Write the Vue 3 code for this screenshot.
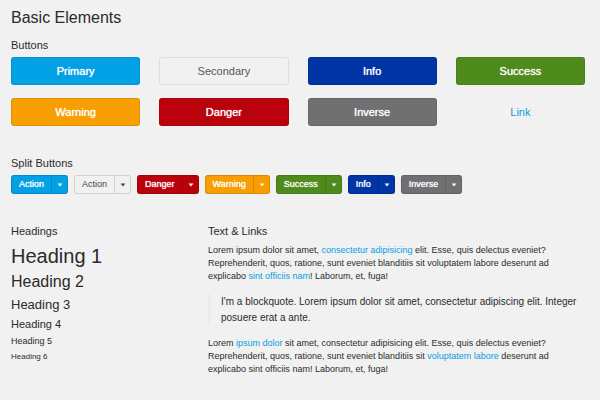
<script setup>
const buttons = ['Primary', 'Secondary', 'Info', 'Success', 'Warning', 'Danger', 'Inverse']

const splitButtons = [
  { label: 'Action', kind: 'primary' },
  { label: 'Action', kind: 'secondary' },
  { label: 'Danger', kind: 'danger' },
  { label: 'Warning', kind: 'warning' },
  { label: 'Success', kind: 'success' },
  { label: 'Info', kind: 'info' },
  { label: 'Inverse', kind: 'inverse' },
]
</script>

<template>
  <main class="page">
    <h1 class="title">Basic Elements</h1>

    <section>
      <h2 class="label">Buttons</h2>
      <div class="button-grid">
        <button v-for="name in buttons" :key="name" type="button" class="btn" :class="name.toLowerCase()">
          {{ name }}
        </button>
        <a href="#" class="btn link">Link</a>
      </div>
    </section>

    <section class="split-section">
      <h2 class="label">Split Buttons</h2>
      <div class="split-row">
        <div v-for="item in splitButtons" :key="item.kind" class="split" :class="item.kind">
          <button type="button" class="split-main">{{ item.label }}</button>
          <button type="button" class="split-toggle" :aria-label="item.label + ' options'">
            <svg class="caret" viewBox="0 0 6 4" aria-hidden="true">
              <path d="M0.6 0.6h4.8L3 3.4z" fill="currentColor" />
            </svg>
          </button>
        </div>
      </div>
    </section>

    <div class="columns">
      <section>
        <h2 class="label">Headings</h2>
        <h1 class="h1">Heading 1</h1>
        <h2 class="h2">Heading 2</h2>
        <h3 class="h3">Heading 3</h3>
        <h4 class="h4">Heading 4</h4>
        <h5 class="h5">Heading 5</h5>
        <h6 class="h6">Heading 6</h6>
      </section>

      <section class="prose">
        <h2 class="label">Text &amp; Links</h2>
        <p>
          Lorem ipsum dolor sit amet, <a href="#">consectetur adipisicing</a> elit. Esse, quis delectus eveniet?
          Reprehenderit, quos, ratione, sunt eveniet blanditiis sit voluptatem labore deserunt ad explicabo
          <a href="#">sint officiis nam</a>! Laborum, et, fuga!
        </p>
        <blockquote>
          I'm a blockquote. Lorem ipsum dolor sit amet, consectetur adipiscing elit. Integer posuere erat a ante.
        </blockquote>
        <p>
          Lorem <a href="#">ipsum dolor</a> sit amet, consectetur adipisicing elit. Esse, quis delectus eveniet?
          Reprehenderit, quos, ratione, sunt eveniet blanditiis sit <a href="#">voluptatem labore</a> deserunt ad
          explicabo sint officiis nam! Laborum, et, fuga!
        </p>
      </section>
    </div>
  </main>
</template>

<style>
body {
  background: #f1f1f1;
}
</style>

<style scoped>
.page {
  padding: 8px 15px 20px 11px;
  color: #2b2b2b;
  font-family: "Liberation Sans", Arial, sans-serif;
  font-size: 9px;
  line-height: 13px;
}

h1, h2, h3, h4, h5, h6, p {
  margin: 0;
  font-weight: 400;
}

.title {
  font-size: 16px;
  line-height: 20px;
  margin-bottom: 9px;
}

.label {
  font-size: 11px;
  line-height: 16px;
  margin-bottom: 4px;
}

a {
  color: #049fe1;
  text-decoration: none;
}

.button-grid {
  display: grid;
  grid-template-columns: repeat(4, 1fr);
  gap: 13px 19px;
}

.btn {
  display: block;
  box-sizing: border-box;
  padding: 5px;
  border: 1px solid rgba(0, 0, 0, 0.08);
  border-radius: 3px;
  color: #fff;
  font-family: inherit;
  font-size: 11px;
  line-height: 16px;
  text-align: center;
  text-shadow: 0 0 1px currentColor;
}

.primary { background: #02a0e4; }
.secondary { background: #f1f1f1; color: #555; }
.info { background: #0134a4; }
.success { background: #4f8a1d; }
.warning { background: #f79e02; }
.danger { background: #b9020c; }
.inverse { background: #6f7072; }

.btn.secondary,
.btn.link {
  text-shadow: none;
}

.btn.link {
  border-color: transparent;
  color: #049fe1;
}

.split-section {
  margin-top: 29px;
}

.split-row {
  display: flex;
  flex-wrap: wrap;
  gap: 6px;
}

.split {
  display: flex;
  box-sizing: border-box;
  border: 1px solid rgba(0, 0, 0, 0.12);
  border-radius: 3px;
  color: #fff;
}

.split.secondary {
  color: #444;
}

.split button {
  border: 0;
  background: none;
  color: inherit;
  font-family: inherit;
  font-size: 9px;
  line-height: 13px;
  text-shadow: 0 0 1px currentColor;
}

.split.secondary button {
  text-shadow: none;
}

.split .split-main {
  padding: 2px 7px;
}

.split .split-toggle {
  display: flex;
  align-items: center;
  padding: 0 4px 0 5px;
  border-left: 1px solid rgba(0, 0, 0, 0.12);
}

.caret {
  display: block;
  width: 6px;
  height: 4px;
}

.columns {
  display: grid;
  grid-template-columns: 178px 1fr;
  gap: 19px;
  margin-top: 29px;
}

.h1 { font-size: 20px; line-height: 26px; }
.h2 { font-size: 16px; line-height: 26px; }
.h3 { font-size: 13px; line-height: 20px; }
.h4 { font-size: 11px; line-height: 18px; }
.h5 { font-size: 9px; line-height: 16px; }
.h6 { font-size: 8px; line-height: 16px; }

.prose .label {
  margin-bottom: 5px;
}

blockquote {
  margin: 11px 0;
  padding-left: 11px;
  border-left: 2px solid #eaeaea;
  font-size: 10px;
  line-height: 16px;
}
</style>
